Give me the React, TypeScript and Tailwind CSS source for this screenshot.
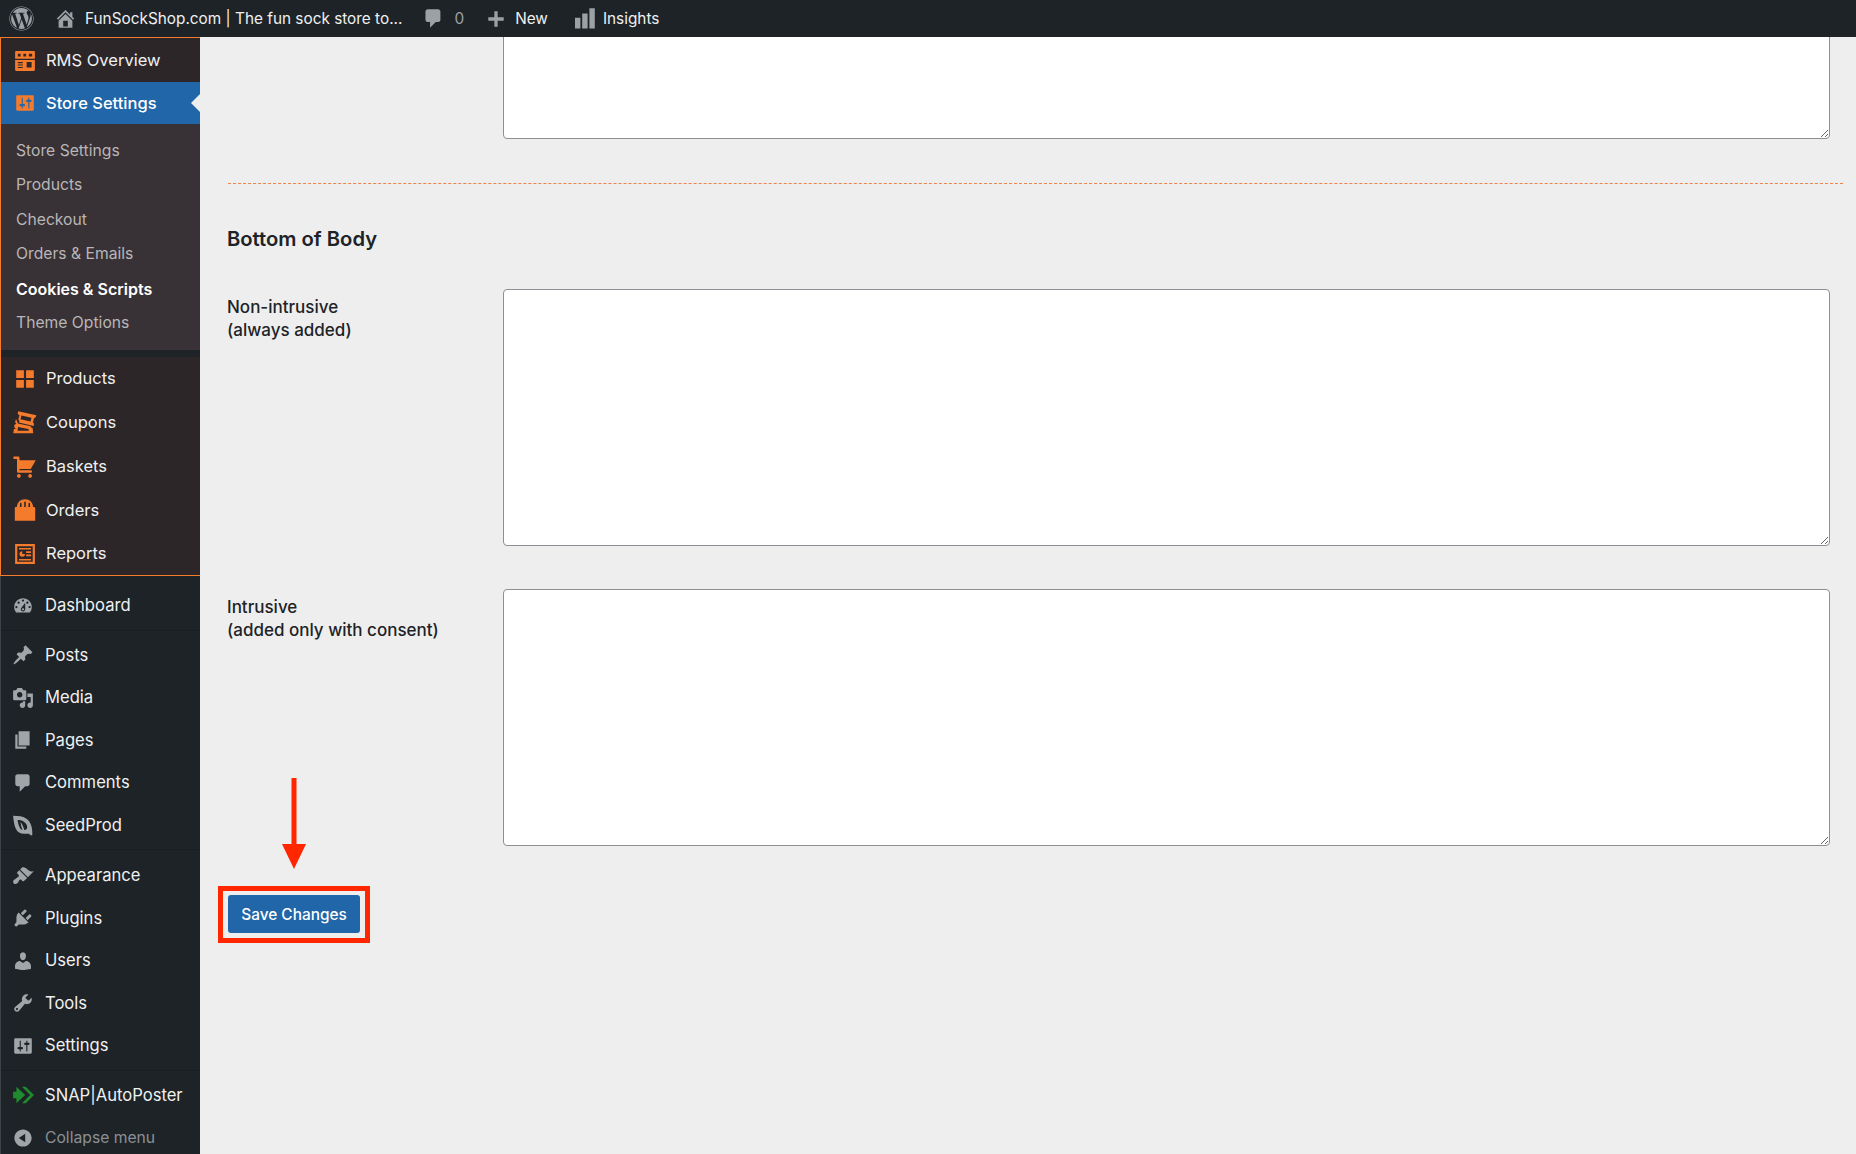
import { FaWordpress } from "react-icons/fa";

const d = {
  home: "M16 8.5l1.53 1.53-1.06 1.06L10 4.62l-6.47 6.47-1.06-1.06L10 2.5l4 4v-2h2v4zm-6-2.46l6 5.99V18H4v-5.97zM12 17v-5H8v5h4z",
  comment: "M5 2h9c1.1 0 2 .9 2 2v7c0 1.1-.9 2-2 2h-2l-5 5v-5H5c-1.1 0-2-.9-2-2V4c0-1.1.9-2 2-2z",
  plus: "M17 8.5v3h-5.5V17h-3v-5.5H3v-3h5.5V3h3v5.5H17z",
  bars: "M2.500 9h4.500v9H2.500zM8.500 5.500h4.500V18H8.500zM14.500 1h4.500v17h-4.500z",
  cart: "M6 13h9c.55 0 1 .45 1 1s-.45 1-1 1H5c-.55 0-1-.45-1-1V4H2c-.55 0-1-.45-1-1s.45-1 1-1h3c.55 0 1 .45 1 1v2h13l-4 7H6v1zm-.5 3c.83 0 1.5.67 1.5 1.5S6.33 19 5.5 19 4 18.33 4 17.5 4.67 16 5.5 16zm9 0c.83 0 1.5.67 1.5 1.5s-.67 1.5-1.5 1.5-1.5-.67-1.5-1.5.67-1.5 1.5-1.5z",
  grid: "M2 2h7v7H2zM11 2h7v7h-7zM2 11h7v7H2zM11 11h7v7h-7z",
  bag: "M1.500 8.500c0-.6.4-1 1-1h.7C3.600 3.400 6 1 10 1s6.400 2.400 6.800 6.500h.7c.6 0 1 .4 1 1V19h-17V8.500zM5.800 7.500h1.300V5c0-.7-.3-1.100-.650-1.100S5.800 4.300 5.800 5v2.500zm3.550 0h1.300V4c0-.7-.3-1.100-.650-1.100S9.350 3.300 9.350 4v3.500zm3.550 0h1.300V5c0-.7-.3-1.100-.650-1.100S12.900 4.300 12.900 5v2.500z",
  report: "M1 1h18v18H1V1zm2 2v14h14V3H3zm1.500 1.500h11V6h-11V4.500zm0 10h11V16h-11v-1.500zM7.500 7.500V10H10a2.500 2.500 0 1 1-2.500-2.500zM11 7.500h4.500V9H11V7.500zm0 3h4.500V12H11v-1.500z",
  rms: "M2 1h16c.6 0 1 .4 1 1v16c0 .6-.4 1-1 1H2c-.6 0-1-.4-1-1V2c0-.6.4-1 1-1zM3.500 3.500v2.500H6V3.500H3.500zm5 0v2.500H11V3.500H8.500zm5 0v2.500h3V3.500h-3zM1 8v1h18V8H1zm2.500 3v1H8v-1H3.500zm0 2.200v1H8v-1H3.500zm0 2.200v1H8v-1H3.500zm8-4.400v5H16v-5h-4.500z",
  sliders: "M18 16V4c0-.55-.45-1-1-1H3c-.55 0-1 .45-1 1v12c0 .55.45 1 1 1h14c.55 0 1-.45 1-1zM8 11h1c.55 0 1 .45 1 1s-.45 1-1 1H8v1.500c0 .28-.22.5-.5.5s-.5-.22-.5-.5V13H6c-.55 0-1-.45-1-1s.45-1 1-1h1V5.500c0-.28.22-.5.5-.5s.5.22.5.5V11zm5-2h-1c-.55 0-1-.45-1-1s.45-1 1-1h1V5.500c0-.28.22-.5.5-.5s.5.22.5.5V7h1c.55 0 1 .45 1 1s-.45 1-1 1h-1v5.500c0 .28-.22.5-.5.5s-.5-.22-.5-.5V9z",
  coupon: "M5 1l14.500 3.200-.7 1.800-1.200.5-.9 3.500 1 1-.4 1.700L5.500 10 6 8.700 5 7.500l1-3.400-1.500-1L5 1zm2.500 3.300L6.800 7.300l8 1.800.8-3-8.100-1.800zM3.500 7.500l1.200 3.300 10.300 2.200.2 1 1.300.4.500 4.100H1l.5-3.200 1.500-.5-1.300-1.300.3-1.800 1.500-.7-1-1 .5-2.500zm1.300 6L4.500 16.500h9l-.3-1.300-8.400-1.700z",
  dashboard: "M3.760 16h12.480c1.100-1.370 1.760-3.110 1.760-5 0-4.420-3.580-8-8-8s-8 3.580-8 8c0 1.890.66 3.630 1.760 5zM10 4c.55 0 1 .45 1 1s-.45 1-1 1-1-.45-1-1 .45-1 1-1zM6 6c.55 0 1 .45 1 1s-.45 1-1 1-1-.45-1-1 .45-1 1-1zm8 0c.55 0 1 .45 1 1s-.45 1-1 1-1-.45-1-1 .45-1 1-1zm-5.370 5.550L12 7v6c0 1.100-.9 2-2 2s-2-.9-2-2c0-.57.24-1.080.63-1.450zM4 10c.55 0 1 .45 1 1s-.45 1-1 1-1-.45-1-1 .45-1 1-1zm12 0c.55 0 1 .45 1 1s-.45 1-1 1-1-.45-1-1 .45-1 1-1zm-5 3c0-.55-.45-1-1-1s-1 .45-1 1 .45 1 1 1 1-.45 1-1z",
  pin: "M10.440 3.020l1.820-1.820 6.360 6.350-1.830 1.820c-1.050-.68-2.480-.57-3.410.36l-.75.75c-.92.93-1.040 2.350-.35 3.410l-1.830 1.820-2.410-2.410-2.800 2.790c-.42.42-3.380 2.710-3.800 2.290s1.860-3.390 2.280-3.810l2.790-2.790L4.100 9.360l1.830-1.820c1.050.69 2.480.57 3.400-.36l.75-.75c.93-.92 1.050-2.350.36-3.410z",
  media: "M13 11V4c0-.55-.45-1-1-1h-1.670L9 1H5L3.670 3H2c-.55 0-1 .45-1 1v7c0 .55.45 1 1 1h10c.55 0 1-.45 1-1zM7 4.500c1.380 0 2.500 1.120 2.500 2.500S8.380 9.500 7 9.500 4.500 8.380 4.500 7 5.620 4.500 7 4.500zM14 6h5v10.500c0 1.380-1.120 2.500-2.500 2.500S14 17.880 14 16.500s1.120-2.500 2.500-2.500c.17 0 .34.02.5.05V9h-3V6zm-4 8.050V13h2v3.500c0 1.380-1.120 2.500-2.500 2.500S7 17.880 7 16.500 8.120 14 9.500 14c.17 0 .34.02.5.05z",
  page: "M6 15V2h10v13H6zm-1 1h8v2H3V5h2v11z",
  seed: "M1 1.500c5 0 9 .5 12.500 3 3.500 2.800 5 7 5 13.500l-.2 1.500c-1.700-.2-2.300-.8-2.800-1.500H11c-3.500 0-6.200-1.500-7.500-4.500C2 10.500 1.500 6 1 1.500zm4 4c.5 3 1.200 5.500 2.300 7.200.5.800 1.200 1.500 2.200 1.800-1-2.500-1.500-5-1.800-7.500 1.500 2 2.800 4.500 3.500 7.500 1.500.2 2.500-.8 2.600-2.500.1-2-1.300-4-3.300-5.200C9 5.700 7 5.500 5 5.500z",
  appearance: "M14.480 11.060L7.410 3.990l1.500-1.500c.5-.56 2.300-.47 3.510.32 1.210.8 1.430 1.280 2.910 2.100 1.180.64 2.450 1.260 4.450.85zm-.71.71L6.700 4.700 4.930 6.470c-.39.39-.39 1.020 0 1.410l1.060 1.060c.39.39.39 1.030 0 1.420-.6.6-1.430 1.110-2.210 1.690-.35.26-.7.53-1.010.84C1.430 13.230.4 14.890 1.450 16.500c.83 1.260 2.500.91 3.650-.24.4-.4.65-.84.88-1.300.28-.55.53-1.100.96-1.530.4-.39 1.030-.39 1.420 0l1.060 1.060c.39.39 1.020.39 1.410 0z",
  plugin: "M13.110 4.360L9.870 7.600 8 5.730l3.240-3.240c.35-.34 1.050-.2 1.560.32.52.51.66 1.210.31 1.550zm-8 1.770l.91-1.120 9.010 9.010-1.190.84c-.71.71-2.630 1.160-3.820 1.160H6.140L4.900 17.260c-.59.59-1.540.59-2.120 0-.59-.58-.59-1.530 0-2.120l1.240-1.240v-3.880c0-1.130.4-3.190 1.090-3.890zm7.260 3.970l3.240-3.240c.34-.35 1.040-.21 1.550.31.52.51.66 1.210.31 1.550l-3.240 3.250z",
  user: "M10 9.250c-2.270 0-2.730-3.440-2.730-3.440C7 4.020 7.820 2 9.970 2c2.160 0 2.980 2.020 2.710 3.810 0 0-.41 3.440-2.680 3.440zm0 2.570L12.720 10c2.390 0 4.520 2.330 4.520 4.530v2.490s-3.650 1.130-7.240 1.130c-3.650 0-7.240-1.130-7.240-1.130v-2.490c0-2.250 1.940-4.480 4.470-4.480z",
  tools: "M16.680 9.770c-1.340 1.340-3.300 1.670-4.950.99l-5.410 6.520c-.99.99-2.590.99-3.580 0s-.99-2.590 0-3.570l6.520-5.420c-.68-1.650-.35-3.610.99-4.950 1.280-1.280 3.120-1.620 4.720-1.060l-2.890 2.890 2.820 2.820 2.860-2.870c.53 1.580.18 3.390-1.080 4.650zM3.810 16.210c.4.39 1.040.39 1.430 0 .4-.4.4-1.040 0-1.430-.39-.4-1.030-.4-1.430 0-.39.39-.39 1.030 0 1.430z",
  snap: "M1 7h3V2.500L12 10l-8 7.500V13H1V7zM9 2.500h3.500L20 10l-7.500 7.500H9l7.500-7.500L9 2.500z",
  collapse: "M10 2.160c4.330 0 7.840 3.510 7.840 7.840s-3.510 7.840-7.840 7.840S2.160 14.330 2.160 10 5.710 2.160 10 2.160zm2 11.720V6.120L6.180 9.970z",
};

function Icon({ path, className }: { path: string; className?: string }) {
  return (
    <svg viewBox="0 0 20 20" fill="currentColor" fillRule="evenodd" className={className}>
      <path d={path} />
    </svg>
  );
}

function PluginRow({ label, path, icon = "ml-[13px] mr-[10px] h-[22px] w-[22px]" }: { label: string; path: string; icon?: string }) {
  return (
    <div className="flex h-[43.7px] items-center text-[#f0f0f1]">
      <Icon path={path} className={"shrink-0 text-[#f47a2c] " + icon} />
      <span>{label}</span>
    </div>
  );
}

function WpRow({ label, path, iconClass = "text-[#a0a5aa]", textClass = "text-[#f0f0f1] text-[16.6px]" }: { label: string; path: string; iconClass?: string; textClass?: string }) {
  return (
    <div className={"flex h-[42.5px] items-center " + textClass}>
      <Icon path={path} className={"ml-[11px] mr-[11px] h-[22px] w-[22px] shrink-0 " + iconClass} />
      <span>{label}</span>
    </div>
  );
}

const subItems = ["Store Settings", "Products", "Checkout", "Orders & Emails", "Cookies & Scripts", "Theme Options"];

function Sidebar() {
  return (
    <aside className="h-full w-[200px] shrink-0 overflow-hidden bg-[#1d2327] text-[16.5px]">
      <div className="border-l border-t border-[#f47a2c] bg-[#2c2629]">
        <div className="flex h-[44px] items-center pt-px text-[#f0f0f1]">
          <Icon path={d.rms} className="ml-[13px] mr-[10px] h-[22px] w-[22px] shrink-0 text-[#f47a2c]" />
          <span>RMS Overview</span>
        </div>
        <div className="relative flex h-[42px] items-center bg-[#2066a8] font-medium text-white">
          <Icon path={d.sliders} className="ml-[13px] mr-[10px] h-[22px] w-[22px] shrink-0 text-[#f47a2c]" />
          <span>Store Settings</span>
          <div className="absolute right-0 top-1/2 h-0 w-0 -translate-y-1/2 border-y-[9px] border-r-[9px] border-y-transparent border-r-[#eeeeee]" />
        </div>
        <div className="h-[226px] bg-[#383135] pl-[15px] pt-[9px] text-[15.7px] text-[#b9b6b8]">
          {subItems.map((item) => (
            <div key={item} className={"flex h-[34.6px] items-center " + (item === "Cookies & Scripts" ? "text-[16px] font-semibold text-white" : "")}>
              {item}
            </div>
          ))}
        </div>
        <div className="h-[7px] bg-[#1d2327]" />
        <PluginRow label="Products" path={d.grid} />
        <PluginRow label="Coupons" path={d.coupon} icon="ml-[11px] mr-[9px] h-[25px] w-[25px]" />
        <PluginRow label="Baskets" path={d.cart} icon="ml-[11px] mr-[9px] h-[25px] w-[25px]" />
        <PluginRow label="Orders" path={d.bag} icon="ml-[12px] mr-[9px] h-[24px] w-[24px]" />
        <PluginRow label="Reports" path={d.report} />
      </div>
      <div className="h-px bg-[#f47a2c]" />
      <div className="border-l border-[#3c4348]">
        <div className="pt-[8px]">
          <WpRow label="Dashboard" path={d.dashboard} />
        </div>
        <div className="mt-[3px] border-t border-[#191e22] pt-[3px]">
          <WpRow label="Posts" path={d.pin} />
          <WpRow label="Media" path={d.media} />
          <WpRow label="Pages" path={d.page} />
          <WpRow label="Comments" path={d.comment} />
          <WpRow label="SeedProd" path={d.seed} />
        </div>
        <div className="mt-[3px] border-t border-[#191e22] pt-[4px]">
          <WpRow label="Appearance" path={d.appearance} />
          <WpRow label="Plugins" path={d.plugin} />
          <WpRow label="Users" path={d.user} />
          <WpRow label="Tools" path={d.tools} />
          <WpRow label="Settings" path={d.sliders} />
        </div>
        <div className="mt-[3px] border-t border-[#191e22] pt-[3px]">
          <WpRow label="SNAP|AutoPoster" path={d.snap} iconClass="text-[#1f8a2e]" />
          <WpRow label="Collapse menu" path={d.collapse} textClass="text-[#8c9095] text-[15.7px]" />
        </div>
      </div>
    </aside>
  );
}

function TopBar() {
  return (
    <header className="flex h-[37px] shrink-0 items-center bg-[#1d2327] text-[15.35px] text-[#f0f0f1]">
      <FaWordpress className="ml-[9px] h-[25px] w-[25px] text-[#9ca1a6]" />
      <Icon path={d.home} className="ml-[20px] h-[23px] w-[23px] text-[#9ca1a6]" />
      <span className="ml-[8px]">FunSockShop.com | The fun sock store to...</span>
      <Icon path={d.comment} className="ml-[20px] h-[23px] w-[23px] text-[#9ca1a6]" />
      <span className="ml-[9px] text-[#9ca1a6]">0</span>
      <Icon path={d.plus} className="ml-[21px] h-[22px] w-[22px] text-[#9ca1a6]" />
      <span className="ml-[8px]">New</span>
      <Icon path={d.bars} className="ml-[24px] h-[24px] w-[24px] text-[#9ca1a6]" />
      <span className="ml-[7px]">Insights</span>
    </header>
  );
}

function FieldRow({ label, note, className }: { label: string; note: string; className?: string }) {
  return (
    <div className={"flex " + (className ?? "")}>
      <div className="-ml-px w-[276px] shrink-0 pt-[7px] text-[17px] font-medium leading-[23px] text-[#1d2327]">
        {label}
        <br />
        {note}
      </div>
      <textarea className="mr-[13px] h-[257px] flex-1 rounded-[4px] border border-[#8c8f94] bg-white" />
    </div>
  );
}

export default function App() {
  return (
    <div className="flex h-screen flex-col overflow-hidden bg-[#eeeeee] font-['Inter',sans-serif]">
      <TopBar />
      <div className="flex min-h-0 flex-1">
        <Sidebar />
        <main className="min-w-0 flex-1 overflow-hidden pl-[28px] pr-[13px]">
          <div className="flex">
            <div className="w-[275px] shrink-0" />
            <textarea className="mr-[13px] -mt-[20px] h-[122px] flex-1 rounded-[4px] border border-[#8c8f94] bg-white" />
          </div>
          <div className="mt-[44px] border-t border-dashed border-[#f0814a]" />
          <h2 className="-ml-px mt-[43px] text-[20.2px] font-semibold leading-[24px] text-[#1d2327]">Bottom of Body</h2>
          <FieldRow className="mt-[38px]" label="Non-intrusive" note="(always added)" />
          <FieldRow className="mt-[43px]" label="Intrusive" note="(added only with consent)" />
          <div className="relative mt-[40px] -ml-[10px] w-fit border-[5px] border-[#ff2600] px-[5px] pb-[5px] pt-[4px]">
            <svg viewBox="0 0 24 91" className="absolute left-[59px] top-[-113px] h-[91px] w-[24px] text-[#ff2600]" fill="currentColor">
              <path d="M9.500 0h5v66h9.500L12 91 0 66h9.500z" />
            </svg>
            <button className="flex h-[38px] w-[132px] items-center justify-center rounded-[3px] bg-[#2066a8] pt-px text-[15.4px] font-medium text-white">
              Save Changes
            </button>
          </div>
        </main>
      </div>
    </div>
  );
}
